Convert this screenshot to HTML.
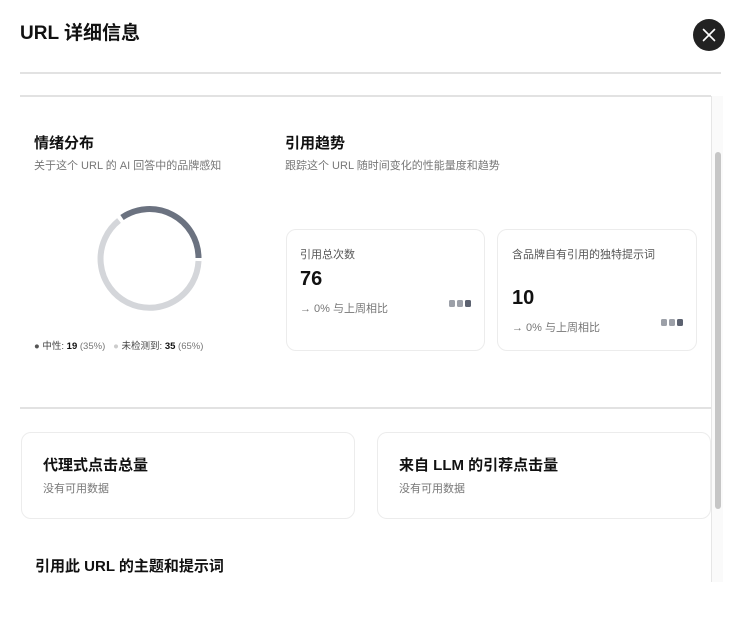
<!DOCTYPE html>
<html><head><meta charset="utf-8"><style>
*{margin:0;padding:0;box-sizing:border-box}
body{width:750px;height:620px;background:#fff;position:relative;overflow:hidden;font-family:"Liberation Sans","Noto Sans CJK SC",sans-serif;color:#111}
.a{position:absolute;white-space:nowrap}
.h{font-weight:700}
.card{position:absolute;border:1px solid #ececec;border-radius:10px;background:#fff}
.g{color:#777}
</style></head><body>
<div class="a h" style="left:20px;top:18px;font-size:19px">URL 详细信息</div>
<div class="a" style="left:693px;top:19px;width:32px;height:32px;border-radius:50%;background:#222">
<svg width="32" height="32"><path d="M10.5 10.5L21.5 21.5M21.5 10.5L10.5 21.5" stroke="#fff" stroke-width="1.6" stroke-linecap="round"/></svg></div>
<div class="a" style="left:20px;top:72px;width:701px;height:2px;background:#e2e2e2"></div>
<div class="a" style="left:20px;top:95px;width:691px;height:2px;background:#e2e2e2"></div>
<div class="a" style="left:711px;top:96px;width:12px;height:486px;background:#fafafa;border-left:1px solid #e6e6e6"></div>
<div class="a" style="left:715px;top:152px;width:6px;height:357px;border-radius:3px;background:#c6c6c6"></div>

<div class="a h" style="left:34px;top:132px;font-size:15px">情绪分布</div>
<div class="a g" style="left:34px;top:157px;font-size:11px">关于这个 URL 的 AI 回答中的品牌感知</div>
<svg class="a" style="left:95px;top:205px" width="110" height="110">
<path d="M103.5 56 A49 49 0 1 1 24 15.5" fill="none" stroke="#d4d6da" stroke-width="6"/>
<path d="M27 12.5 A49 49 0 0 1 103.5 53" fill="none" stroke="#6b7280" stroke-width="6"/>
</svg>
<div class="a" style="left:34px;top:338px;font-size:9.5px;color:#444"><span style="color:#555">●</span> 中性: <b style="color:#111">19</b> <span class="g">(35%)</span>&nbsp;&nbsp; <span style="color:#ccc">●</span> 未检测到: <b style="color:#111">35</b> <span class="g">(65%)</span></div>

<div class="a h" style="left:285px;top:132px;font-size:15px">引用趋势</div>
<div class="a g" style="left:285px;top:157px;font-size:11px">跟踪这个 URL 随时间变化的性能量度和趋势</div>

<div class="card" style="left:286px;top:229px;width:199px;height:122px"></div>
<div class="a" style="left:300px;top:246px;font-size:11px;color:#555">引用总次数</div>
<div class="a h" style="left:300px;top:268px;font-size:20px">76</div>
<div class="a g" style="left:300px;top:300px;font-size:11px">→ 0% 与上周相比</div>
<svg class="a" style="left:449px;top:299px" width="24" height="10"><rect x="0" y="1" width="6" height="7" rx="1.5" fill="#9ca0a8"/><rect x="8" y="1" width="6" height="7" rx="1.5" fill="#9ca0a8"/><rect x="16" y="1" width="6" height="7" rx="1.5" fill="#5c6270"/></svg>

<div class="card" style="left:497px;top:229px;width:200px;height:122px"></div>
<div class="a" style="left:512px;top:246px;font-size:11px;color:#555">含品牌自有引用的独特提示词</div>
<div class="a h" style="left:512px;top:287px;font-size:20px">10</div>
<div class="a g" style="left:512px;top:319px;font-size:11px">→ 0% 与上周相比</div>
<svg class="a" style="left:661px;top:318px" width="24" height="10"><rect x="0" y="1" width="6" height="7" rx="1.5" fill="#9ca0a8"/><rect x="8" y="1" width="6" height="7" rx="1.5" fill="#9ca0a8"/><rect x="16" y="1" width="6" height="7" rx="1.5" fill="#5c6270"/></svg>

<div class="a" style="left:20px;top:407px;width:691px;height:2px;background:#e2e2e2"></div>

<div class="card" style="left:21px;top:432px;width:334px;height:87px"></div>
<div class="a h" style="left:43px;top:454px;font-size:15px">代理式点击总量</div>
<div class="a g" style="left:43px;top:480px;font-size:11px">没有可用数据</div>
<div class="card" style="left:377px;top:432px;width:334px;height:87px"></div>
<div class="a h" style="left:399px;top:454px;font-size:15px">来自 LLM 的引荐点击量</div>
<div class="a g" style="left:399px;top:480px;font-size:11px">没有可用数据</div>

<div class="a h" style="left:35px;top:555px;font-size:15px">引用此 URL 的主题和提示词</div>
</body></html>
